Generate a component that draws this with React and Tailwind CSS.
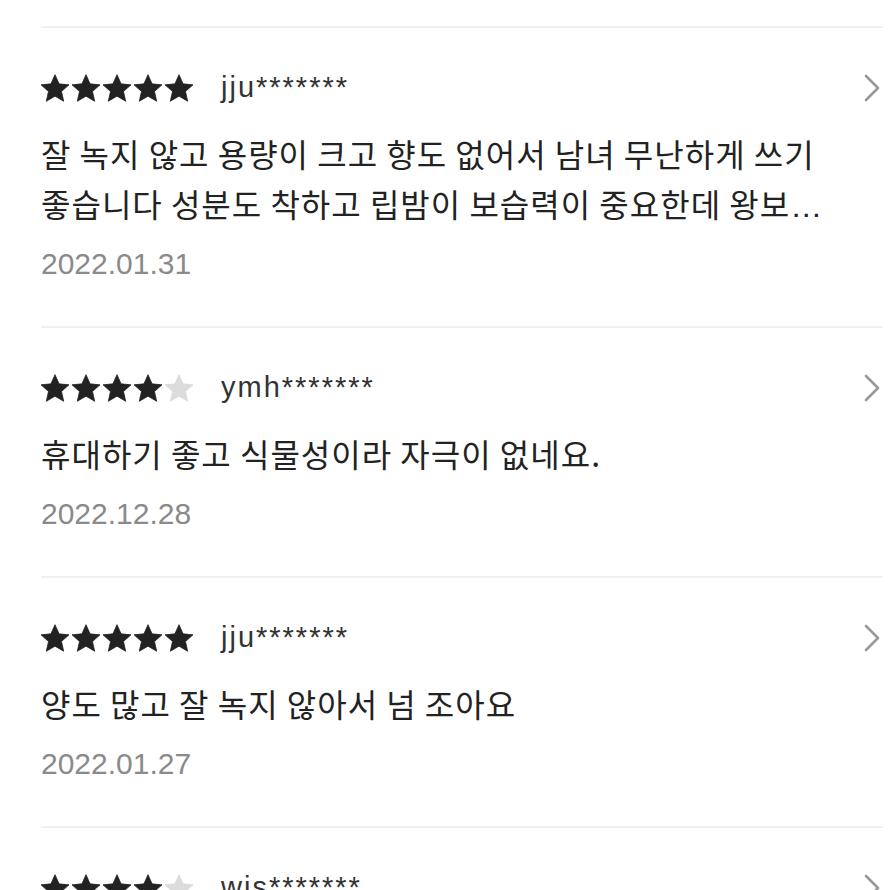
import React from "react";

const reviews = [
  {
    rating: 5,
    user: "jju*******",
    lines: ["잘 녹지 않고 용량이 크고 향도 없어서 남녀 무난하게 쓰기", "좋습니다 성분도 착하고 립밤이 보습력이 중요한데 왕보"],
    more: true,
    date: "2022.01.31",
  },
  {
    rating: 4,
    user: "ymh*******",
    lines: ["휴대하기 좋고 식물성이라 자극이 없네요."],
    date: "2022.12.28",
  },
  {
    rating: 5,
    user: "jju*******",
    lines: ["양도 많고 잘 녹지 않아서 넘 조아요"],
    date: "2022.01.27",
  },
  {
    rating: 4,
    user: "wjs*******",
    lines: ["립밤 하나로 충분해요"],
    date: "2022.01.20",
  },
];

function Star({ on }) {
  return (
    <svg viewBox="1.5 1.3 21 21" className="h-[28px] w-[28px]">
      <path
        d="M12 1.8l3.05 6.9 7.45.72-5.63 4.98 1.65 7.36L12 17.9l-6.52 3.86 1.65-7.36L1.5 9.42l7.45-.72z"
        fill={on ? "#222222" : "#dcdcdc"}
        stroke={on ? "#222222" : "#dcdcdc"}
        strokeWidth="0.6"
        strokeLinejoin="round"
      />
    </svg>
  );
}

function Chevron() {
  return (
    <svg viewBox="0 0 16 28" className="h-[28px] w-[16px]">
      <polyline
        points="2,2 14,14 2,26"
        fill="none"
        stroke="#999999"
        strokeWidth="2.6"
        strokeLinecap="round"
        strokeLinejoin="round"
      />
    </svg>
  );
}

function Review({ r }) {
  return (
    <div className="border-t-2 border-[#f0f0f0] pb-[44px] pt-[45px]">
      <div className="flex h-[30px] items-center justify-between pr-[3px]">
        <div className="flex items-center">
          <div className="flex gap-[3px]">
            {[1, 2, 3, 4, 5].map((i) => (
              <Star key={i} on={i <= r.rating} />
            ))}
          </div>
          <span className="ml-[28px] font-['Liberation_Sans',Arial,sans-serif] text-[29px] tracking-[2px] text-[#333333]">
            {r.user}
          </span>
        </div>
        <Chevron />
      </div>
      <div className="mt-[25px] font-['Noto_Sans_CJK_KR',sans-serif] text-[32px] tracking-[1px] text-[#222222]">
        {r.lines.map((l, i) => (
          <div key={i} className="h-[50px] overflow-visible whitespace-nowrap leading-[50px]">
            {l}
            {r.more && i === r.lines.length - 1 ? (
              <span className="font-['Liberation_Sans',sans-serif] leading-[0] tracking-[-1px]">…</span>
            ) : null}
          </div>
        ))}
      </div>
      <div className="mt-[18px] font-['Liberation_Sans',Arial,sans-serif] text-[30px] leading-[36px] text-[#8a8a8a]">
        {r.date}
      </div>
    </div>
  );
}

export default function App() {
  return (
    <div className="h-[890px] w-[890px] overflow-hidden bg-white">
      <div className="ml-[41px] mr-[7px] pt-[26px]">
        {reviews.map((r, i) => (
          <Review key={i} r={r} />
        ))}
      </div>
    </div>
  );
}
